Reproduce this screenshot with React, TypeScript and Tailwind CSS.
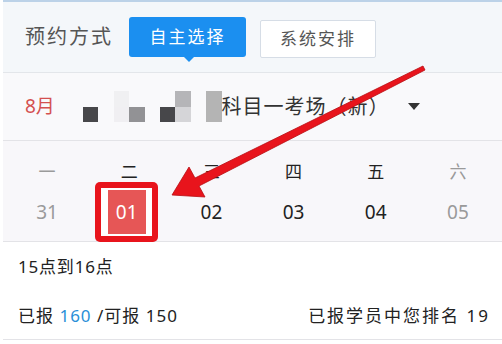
import React from "react";

const FONT = '"Noto Sans", "Noto Sans CJK SC", sans-serif';

const WEEK = [
  { day: "一", date: "31", muted: true },
  { day: "二", date: "01", selected: true },
  { day: "三", date: "02" },
  { day: "四", date: "03" },
  { day: "五", date: "04" },
  { day: "六", date: "05", muted: true },
];

// mosaic cells that hide the exam centre name, row by row (null = empty)
const MOSAIC: (string | null)[] = [
  null, null, "#f0f0f2", null, null, null, "#b5b5b8", null, "#b4b4b4",
  "#47474a", null, "#f0eff2", "#929295", null, "#47474a", "#d5d5d8", null, "#b4b4b4",
];

function Mosaic() {
  return (
    <div className="grid grid-cols-[repeat(9,15.4px)] grid-rows-[repeat(2,15.5px)]">
      {MOSAIC.map((c, i) => (
        <div key={i} style={c ? { backgroundColor: c } : undefined} />
      ))}
    </div>
  );
}

function Arrow() {
  return (
    <svg
      className="pointer-events-none absolute left-0 top-0"
      width="502"
      height="344"
      viewBox="0 0 502 344"
    >
      <polygon
        points="172,195 189,167 195,178 423,66 425,70 199,186 205,197"
        fill="#e8141c"
        stroke="#b80d12"
        strokeWidth="0.8"
        strokeLinejoin="round"
      />
    </svg>
  );
}

export default function App() {
  return (
    <div
      className="relative h-[344px] w-[502px] overflow-hidden bg-white pl-[3px]"
      style={{ fontFamily: FONT }}
    >
      <div className="h-[2px] bg-[#bcd2e8]" />

      {/* booking mode */}
      <div className="flex h-[71px] items-center border-b border-[#e3e6ea] bg-[#f4f7fa] pl-[22px]">
        <span className="text-[20px] tracking-[2px] text-[#555]">预约方式</span>
        <div className="relative ml-[16px] flex h-[40px] w-[117px] items-center justify-center rounded-[3px] bg-[#1b8ff0] text-[17px] tracking-[2px] text-white">
          自主选择
          <span className="absolute -bottom-[5px] left-[55px] h-0 w-0 border-x-[5px] border-t-[5px] border-x-transparent border-t-[#1b8ff0]" />
        </div>
        <div className="ml-[14px] mt-[4px] flex h-[38px] w-[116px] items-center justify-center rounded-[2px] border border-[#d6dde6] bg-white text-[17px] tracking-[2px] text-[#555]">
          系统安排
        </div>
      </div>

      {/* month and exam centre */}
      <div className="flex h-[68px] items-center border-b border-[#e3e3e7] bg-[#f9f9fb] pl-[22px]">
        <span className="w-[58px] text-[19px] text-[#d45050]">8月</span>
        <Mosaic />
        <span className="text-[20px] tracking-[1px] text-[#333]">科目一考场（新）</span>
        <span className="ml-[18px] h-0 w-0 border-x-[6px] border-t-[7px] border-x-transparent border-t-[#333]" />
      </div>

      {/* week strip */}
      <div className="grid h-[101px] grid-cols-6 grid-rows-[20px_21px_60px] border-b border-[#e3e3e7] bg-[#f8f7fa] px-[3px]">
        {WEEK.map((w) => (
          <div
            key={w.day}
            className={`row-start-2 flex items-center justify-center text-[17px] ${
              w.muted ? "text-[#9a9a9a]" : "text-[#222]"
            }`}
          >
            {w.day}
          </div>
        ))}
        {WEEK.map((w) => (
          <div key={w.date} className="row-start-3 flex items-center justify-center">
            {w.selected ? (
              <div className="-ml-[5px] flex h-[60px] w-[63px] items-center justify-center rounded-[5px] bg-[#e8141c] p-[6px]">
                <div className="flex h-full w-full items-center justify-center bg-white">
                  <div className="flex h-[44px] w-[38px] items-center justify-center bg-[#e65656] text-[19px] text-white">
                    {w.date}
                  </div>
                </div>
              </div>
            ) : (
              <span className={`text-[19px] ${w.muted ? "text-[#9a9a9a]" : "text-[#222]"}`}>
                {w.date}
              </span>
            )}
          </div>
        ))}
      </div>

      {/* time slot */}
      <div className="flex h-[50px] items-center pl-[15px] text-[17px] tracking-[0.8px] text-[#222]">15点到16点</div>

      <div className="flex h-[48px] items-center justify-between border-b border-[#e3e3e7] pl-[15px] pr-[12px] text-[17px] tracking-[1px] text-[#222]">
        <span>
          已报 <span className="text-[#2a8fd8]">160</span> /可报 150
        </span>
        <span className="tracking-[2px]">已报学员中您排名 19</span>
      </div>

      <Arrow />
    </div>
  );
}
